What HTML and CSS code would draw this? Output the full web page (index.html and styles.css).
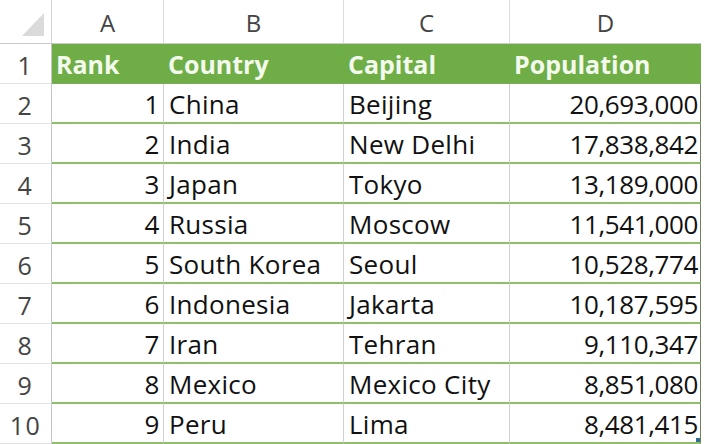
FILE: index.html
```html
<!DOCTYPE html>
<html>
<head>
<meta charset="utf-8">
<link rel="stylesheet" href="styles.css">
</head>
<body>
<div class="sheet">
  <div class="corner"><span class="tri"></span></div>
  <div class="colhdr">A</div>
  <div class="colhdr">B</div>
  <div class="colhdr">C</div>
  <div class="colhdr last">D</div>

  <div class="rowhdr">1</div>
  <div class="th">Rank</div>
  <div class="th">Country</div>
  <div class="th">Capital</div>
  <div class="th last">Population</div>

  <div class="rowhdr">2</div>
  <div class="td num">1</div><div class="td">China</div><div class="td">Beijing</div><div class="td num last">20,693,000</div>
  <div class="rowhdr">3</div>
  <div class="td num">2</div><div class="td">India</div><div class="td">New Delhi</div><div class="td num last">17,838,842</div>
  <div class="rowhdr">4</div>
  <div class="td num">3</div><div class="td">Japan</div><div class="td">Tokyo</div><div class="td num last">13,189,000</div>
  <div class="rowhdr">5</div>
  <div class="td num">4</div><div class="td">Russia</div><div class="td">Moscow</div><div class="td num last">11,541,000</div>
  <div class="rowhdr">6</div>
  <div class="td num">5</div><div class="td">South Korea</div><div class="td">Seoul</div><div class="td num last">10,528,774</div>
  <div class="rowhdr">7</div>
  <div class="td num">6</div><div class="td">Indonesia</div><div class="td">Jakarta</div><div class="td num last">10,187,595</div>
  <div class="rowhdr">8</div>
  <div class="td num">7</div><div class="td">Iran</div><div class="td">Tehran</div><div class="td num last">9,110,347</div>
  <div class="rowhdr">9</div>
  <div class="td num">8</div><div class="td">Mexico</div><div class="td">Mexico City</div><div class="td num last">8,851,080</div>
  <div class="rowhdr">10</div>
  <div class="td num">9</div><div class="td">Peru</div><div class="td">Lima</div><div class="td num last">8,481,415<span class="handle"></span></div>
</div>
</body>
</html>
```
FILE: styles.css
```css
html, body {
  margin: 0;
  padding: 0;
  background: #ffffff;
  overflow: hidden;
}
body {
  width: 704px;
  height: 444px;
  font-family: "Open Sans", "DejaVu Sans", sans-serif;
}
.sheet {
  display: grid;
  grid-template-columns: 52px 112px 180px 166px 191px;
  grid-template-rows: 44px repeat(10, 40px);
}
.sheet > div {
  box-sizing: border-box;
  display: flex;
  align-items: center;
  white-space: nowrap;
  overflow: hidden;
}
.corner {
  position: relative;
  border-right: 1px solid #d4d4d4;
  border-bottom: 1px solid #c8c8c8;
  background: #ffffff;
}
.tri {
  position: absolute;
  left: 22px;
  top: 13px;
  width: 0;
  height: 0;
  border-left: 22px solid transparent;
  border-bottom: 23px solid #dadada;
}
.colhdr {
  justify-content: center;
  font-size: 24px;
  color: #444444;
  border-right: 1px solid #dcdcdc;
  border-bottom: 1px solid #c8c8c8;
  padding-top: 2px;
}
.colhdr.last {
  border-right: none;
}
.rowhdr {
  justify-content: center;
  font-size: 25px;
  letter-spacing: 1.5px;
  color: #444444;
  border-right: 1px solid #c4c4c4;
  border-bottom: 1px solid #e2e2e2;
  padding-top: 2px;
}
.th {
  background: #6fad47;
  color: #f3f9ec;
  font-weight: 700;
  font-size: 25px;
  padding-left: 4px;
  border-bottom: 1px solid #7aa95a;
}
.td {
  font-size: 26px;
  color: #111111;
  padding-left: 5px;
  padding-top: 2px;
  border-right: 1px solid #d0d0d0;
  border-bottom: 2px solid #8fbf6d;
  letter-spacing: 0.3px;
}
.td.num {
  justify-content: flex-end;
  padding-left: 0;
  padding-right: 4px;
  letter-spacing: -0.4px;
}
.td.last {
  position: relative;
  border-right: 1px solid #6f8060;
  padding-right: 2px;
}
.handle {
  position: absolute;
  right: 0;
  bottom: 0;
  width: 4px;
  height: 4px;
  background: #2f6f8f;
}
```
